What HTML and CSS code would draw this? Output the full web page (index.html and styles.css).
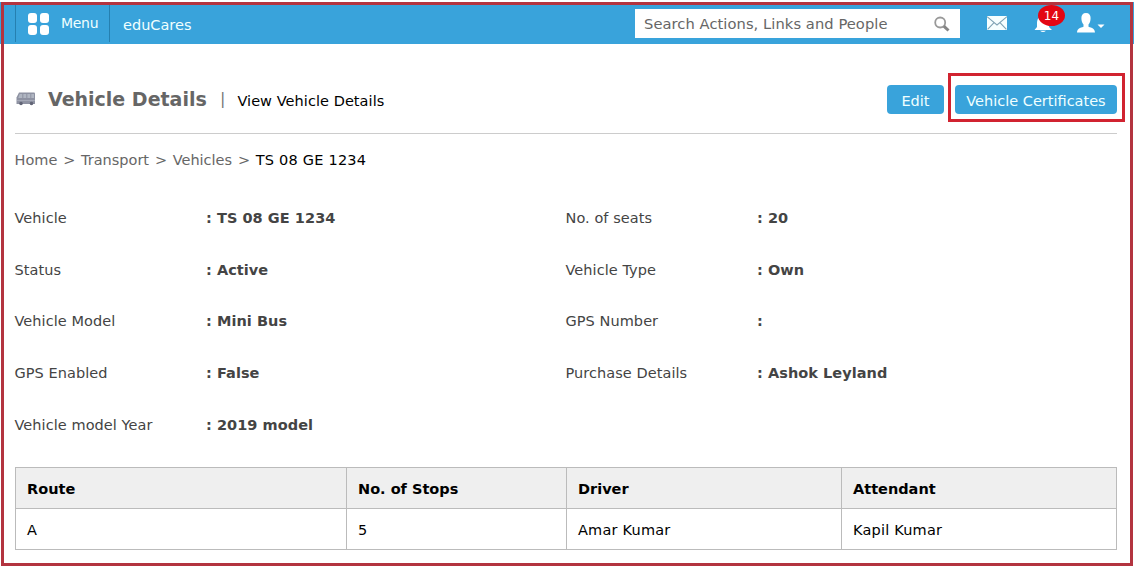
FILE: index.html
```html
<!DOCTYPE html>
<html lang="en">
<head>
<meta charset="utf-8">
<title>Vehicle Details</title>
<link rel="stylesheet" href="styles.css">
</head>
<body>
<header class="topbar">
  <div class="menu">
    <span class="grid-icon"><i></i><i></i><i></i><i></i></span>
    <span class="menu-label">Menu</span>
  </div>
  <span class="brand">eduCares</span>
  <div class="search">
    <span class="search-text">Search Actions, Links and People</span>
    <svg class="search-icon" width="18" height="18" viewBox="0 0 18 18"><circle cx="7.2" cy="6.500" r="5" fill="none" stroke="#999" stroke-width="1.8"/><path d="M10.800 10.200l4.700 4.300" stroke="#858585" stroke-width="3" /></svg>
  </div>
  <svg class="mail" width="20" height="14" viewBox="0 0 20 14"><rect width="20" height="14" fill="#f6ffff"/><path d="M0 .6l10 8.4L20 .6M.6 13.4l6.2-6.6M19.4 13.4l-6.2-6.6" fill="none" stroke="#7fa3b4" stroke-width="1.1"/></svg>
  <div class="bell">
    <svg width="20" height="20" viewBox="0 0 20 20"><path d="M9 2c-4 0-6 3-6 7v4l-2.500 3h17.500l-3-3V9c0-4-2-7-6-7zM6 16.800h6q-3 2.600-6 0z" fill="#fff"/></svg>
    <span class="badge">14</span>
  </div>
  <svg class="user" width="28" height="20" viewBox="0 0 28 20"><path d="M9 0c3.200 0 4.600 2 4.600 5 0 2.800-.7 5-2.100 6.500v2.300c3.500 1 6.200 1.900 6.500 5.700H0c.3-3.800 3-4.700 6.500-5.700v-2.300C5.100 10 4.400 7.800 4.400 5c0-3 1.400-5 4.600-5zM20.500 11.500h7l-3.500 3.500z" fill="#fff"/></svg>
</header>
<main>
  <div class="heading">
    <svg class="bus" width="20" height="14" viewBox="0 0 20 14"><path d="M3 .5h15q1 0 1 1v10.500H.5V5.500z" fill="#8e92a2"/><path d="M3.700 2h2.600v4H2.200zM7.300 2h3v4h-3zM11.300 2h3v4h-3zM15.300 2h2.700v4h-2.700z" fill="#b0b6c2"/><path d="M1 8.500h18" stroke="#a5a9b7"/><circle cx="5" cy="11.500" r="1.800" fill="#626576"/><circle cx="15.500" cy="11.500" r="1.800" fill="#626576"/></svg>
    <h1>Vehicle Details</h1>
    <span class="bar">|</span>
    <span class="sub">View Vehicle Details</span>
    <div class="actions">
      <a class="btn edit">Edit</a>
      <div class="marked"><a class="btn cert">Vehicle Certificates</a></div>
    </div>
  </div>
  <nav class="crumbs"><span>Home</span><span class="gt">&gt;</span><span>Transport</span><span class="gt">&gt;</span><span>Vehicles</span><span class="gt">&gt;</span><span class="here">TS 08 GE 1234</span></nav>
  <dl class="details">
    <dt>Vehicle</dt><dd>: TS 08 GE 1234</dd><dt>No. of seats</dt><dd>: 20</dd>
    <dt>Status</dt><dd>: Active</dd><dt>Vehicle Type</dt><dd>: Own</dd>
    <dt>Vehicle Model</dt><dd>: Mini Bus</dd><dt>GPS Number</dt><dd>:</dd>
    <dt>GPS Enabled</dt><dd>: False</dd><dt>Purchase Details</dt><dd>: Ashok Leyland</dd>
    <dt>Vehicle model Year</dt><dd>: 2019 model</dd>
  </dl>
  <table>
    <colgroup><col class="c1"><col class="c2"><col class="c3"><col class="c4"></colgroup>
    <thead><tr><th>Route</th><th>No. of Stops</th><th>Driver</th><th>Attendant</th></tr></thead>
    <tbody><tr><td>A</td><td>5</td><td>Amar Kumar</td><td>Kapil Kumar</td></tr></tbody>
  </table>
</main>
<div class="frame"></div>
</body>
</html>
```
FILE: styles.css
```css
* { box-sizing: border-box; }
body { margin: 0; width: 1134px; height: 567px; overflow: hidden; background: #fff; color: #444; font: 14.5px/20px Verdana, "DejaVu Sans", sans-serif; white-space: nowrap; }
.topbar { display: flex; align-items: flex-start; height: 44px; padding-top: 3px; border-top: 2px solid #fff; background: #39a3db; color: #f0ffff; }
.menu { display: flex; width: 95px; height: 37px; margin-left: 15px; border: solid #2580b0; border-width: 0 1px; }
.grid-icon { display: grid; grid-template-columns: 9px 9px; grid-template-rows: 10px 10px; gap: 2px 3px; width: 21px; margin: 8px 0 0 12px; }
.grid-icon i { background: #fff; border-radius: 3px; }
.menu-label { margin: 8px 0 0 12px; font-size: 14px; letter-spacing: -.3px; }
.brand { width: 512px; margin: 10px 0 0 13px; }
.search { display: flex; width: 325px; height: 29px; margin-top: 4px; background: #fff; color: #666; }
.search-text { width: 298px; padding: 5px 0 0 9px; font-size: 14.7px; letter-spacing: .06px; }
.search-icon { margin-top: 7px; }
.mail { margin: 11px 0 0 27px; }
.bell { position: relative; width: 20px; height: 28px; margin: 9px 0 0 27px; }
.badge { position: absolute; left: 4px; top: -9px; width: 27px; height: 21px; border-radius: 50%; background: #e30613; color: #fff; font-size: 12px; line-height: 22px; text-align: center; }
.user { margin: 8px 0 0 23px; }
main { padding: 0 17px 0 15px; }
.heading { display: flex; align-items: flex-start; height: 90px; border-bottom: 1px solid #ccc; }
.bus { margin: 48px 13px 0 1px; }
h1 { width: 158px; margin: 43px 0 0 -1px; font-size: 19px; line-height: 24px; color: #666; }
.bar { margin: 45px 0 0 14px; font-size: 16px; color: #777; }
.sub { margin: 47px 0 0 12px; color: #000; letter-spacing: .06px; }
.actions { display: flex; margin: 29px -8px 0 auto; }
.btn { display: block; height: 29px; border-radius: 4px; background: #39a3db; color: #f0ffff; line-height: 32px; text-align: center; }
.edit { width: 57px; margin: 12px 4px 0 0; }
.marked { width: 177px; height: 49px; padding: 9px 4px; border: 3px solid #d12330; }
.cert { width: 162px; }
.crumbs { display: flex; margin: 16px 0 0 -.5px; color: #666; }
.gt { margin: 0 5.5px 0 6px; }
.here { color: #000; letter-spacing: .22px; }
.details { display: grid; grid-template-columns: 191px 360px 191px 1fr; grid-auto-rows: 51.7px; height: 259px; margin: 38px 0 0; }
dt { margin-left: -.5px; letter-spacing: .06px; }
dd { margin: 0; font-weight: bold; letter-spacing: .05px; }
table { width: 1102px; border-collapse: collapse; table-layout: fixed; color: #000; }
.c1 { width: 331px; } .c2 { width: 220px; } .c3 { width: 275px; }
tr { height: 41px; }
th, td { padding: 2px 11px 0; border: 1px solid #bbb; text-align: left; }
th { background: #efefef; }
td { letter-spacing: .2px; }
.frame { position: absolute; left: 1px; top: 2px; width: 1132px; height: 564px; border: 3px solid #b3343f; }
```
